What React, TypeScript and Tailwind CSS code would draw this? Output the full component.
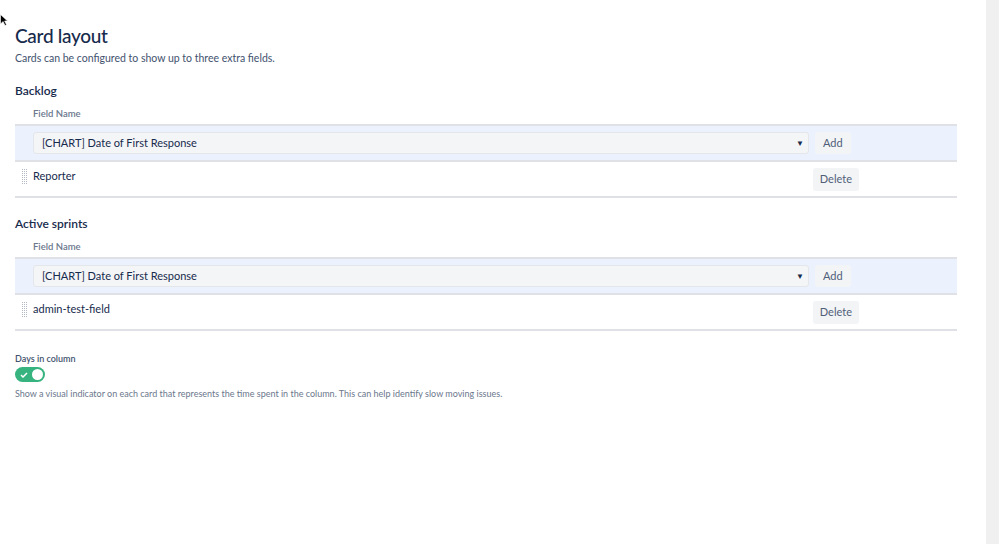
import React from 'react';

type FieldSection = {
  title: string;
  selected: string;
  fields: string[];
};

const sections: FieldSection[] = [
  { title: 'Backlog', selected: '[CHART] Date of First Response', fields: ['Reporter'] },
  { title: 'Active sprints', selected: '[CHART] Date of First Response', fields: ['admin-test-field'] },
];

function DragHandle() {
  return (
    <svg width="6" height="16" viewBox="0 0 6 16" className="shrink-0">
      {Array.from({ length: 8 }).map((_, r) =>
        [0, 1, 2].map((c) => (
          <rect key={`${r}-${c}`} x={c * 2} y={r * 2} width="1" height="1" fill="#b3b9c4" />
        ))
      )}
    </svg>
  );
}

function Section({ section }: { section: FieldSection }) {
  return (
    <div className="mt-[18px]">
      <h3 className="text-[12px] font-semibold leading-[16px] text-[#172b4d]">{section.title}</h3>
      <div className="mt-[8px] pl-[18px] text-[9.5px] font-semibold leading-[14px] text-[#6b778c]">Field Name</div>
      <div className="mt-[3px] flex h-[38px] items-center gap-[6px] border-y-2 border-[#dfe1e6] bg-[#ebf2fe] pl-[18px]">
        <div className="flex h-[22px] w-[776px] items-center justify-between rounded-[3px] border border-[#e4e6ea] bg-[#f4f5f7] pl-[8px] pr-[4px] text-[11px] text-[#172b4d]">
          <span>{section.selected}</span>
          <span className="text-[8px] text-[#172b4d]">▼</span>
        </div>
        <button className="h-[22px] rounded-[3px] bg-[#f3f4f6] px-[8px] text-[11px] text-[#505f79]">Add</button>
      </div>
      {section.fields.map((f) => (
        <div key={f} className="flex h-[36px] items-start border-b-2 border-[#dfe1e6] pl-[7px]">
          <div className="mt-[7px]">
            <DragHandle />
          </div>
          <span className="ml-[5px] mt-[7px] text-[11px] leading-[14px] text-[#172b4d]">{f}</span>
          <button className="ml-auto mr-[98px] mt-[6px] h-[23px] rounded-[3px] bg-[#f3f4f6] px-[7px] text-[11px] text-[#505f79]">
            Delete
          </button>
        </div>
      ))}
    </div>
  );
}

export default function App() {
  return (
    <div
      className="relative flex h-[544px] w-[999px] overflow-hidden bg-white"
      style={{ fontFamily: 'Lato, "Noto Sans", sans-serif' }}
    >
      <svg className="absolute left-0 top-[14px]" width="8" height="12" viewBox="0 0 8 12">
        <path d="M0.5 0.5 L0.5 10 L3 7.5 L5 11.5 L6.5 10.8 L4.6 7 L7.5 7 Z" fill="#000" stroke="#fff" strokeWidth="0.6" />
      </svg>
      <div className="flex-1 pl-[15px] pt-[24px]">
        <div className="w-[942px]">
          <h1 className="text-[19px] font-medium leading-[24px] tracking-[-0.3px] text-[#172b4d]">Card layout</h1>
          <p className="mt-[3px] text-[10.5px] leading-[14px] text-[#42526e]">Cards can be configured to show up to three extra fields.</p>
          {sections.map((s) => (
            <Section key={s.title} section={s} />
          ))}
          <div className="mt-[22px]">
            <div className="text-[9px] font-semibold leading-[12px] text-[#42526e]">Days in column</div>
            <div className="mt-[2px] flex h-[15px] w-[30px] items-center justify-between rounded-full bg-[#36b37e] pl-[5px] pr-[2px]">
              <svg width="8" height="6" viewBox="0 0 8 6">
                <path d="M1 3 L3 5 L7 1" fill="none" stroke="#fff" strokeWidth="1.5" />
              </svg>
              <span className="h-[11px] w-[11px] rounded-full bg-white" />
            </div>
            <p className="mt-[6px] text-[9px] leading-[12px] text-[#6b778c]">
              Show a visual indicator on each card that represents the time spent in the column. This can help identify slow moving issues.
            </p>
          </div>
        </div>
      </div>
      <div className="w-[13px] bg-[#f0f0f0]" />
    </div>
  );
}
